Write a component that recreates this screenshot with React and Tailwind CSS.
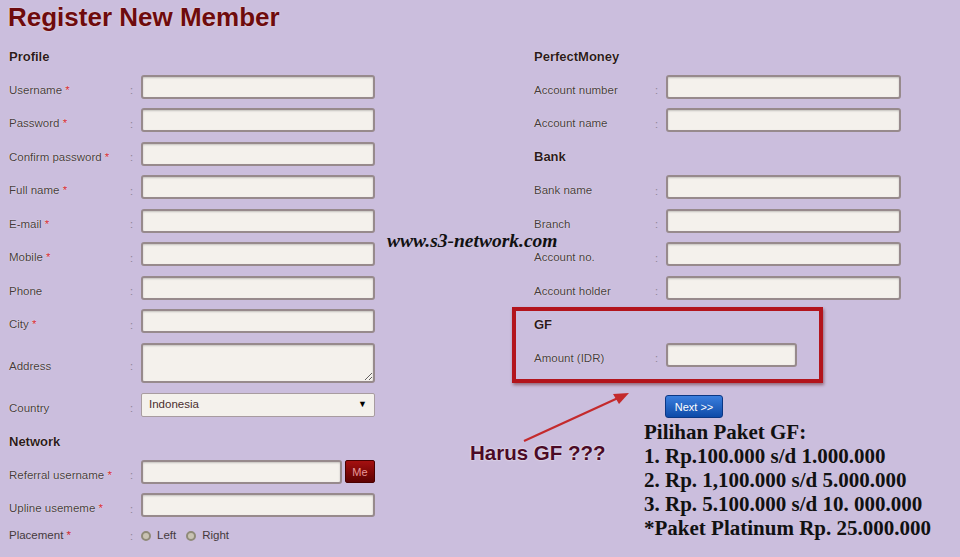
import React from "react";

const inputCls =
  "h-[24px] rounded-[3px] border-2 border-[#978a8c] bg-[#f4f1ec] shadow-[inset_0_1px_2px_rgba(0,0,0,0.2)] outline-none";

function Label({ text, req }) {
  return (
    <span className="mt-[7px] text-[11.5px] text-[#463a3c] [text-shadow:0_0_1px_#ffffff]">
      {text}
      {req && <span className="text-[#d3262e]"> *</span>}
    </span>
  );
}

function Colon() {
  return <span className="mt-[7px] text-[11px] text-[#8e8497]">:</span>;
}

function Heading({ children, className = "" }) {
  return (
    <div className={`flex h-[33.5px] items-center ${className}`}>
      <span className="mt-[6px] text-[13px] font-bold text-[#2d1a1c] [text-shadow:0_0_1px_#ffffff]">
        {children}
      </span>
    </div>
  );
}

function Row({ label, req, width = "w-[234px]", h = "h-[33.5px]", children }) {
  return (
    <div className={`grid grid-cols-[121px_11px_auto] items-center ${h}`}>
      <Label text={label} req={req} />
      <Colon />
      {children || <input className={`${inputCls} ${width}`} />}
    </div>
  );
}

export default function App() {
  return (
    <div className="relative h-[557px] w-[960px] overflow-hidden bg-[#cbbedd] font-['Liberation_Sans',Arial,sans-serif]">
      {/* title */}
      <div className="h-[36.5px] pl-[8px] pt-[1px]">
        <h1 className="text-[26px] font-bold leading-[32px] text-[#6e0b0d] [text-shadow:0_0_2px_#f3dede]">
          Register New Member
        </h1>
      </div>

      <div className="flex">
        {/* left column */}
        <div className="ml-[9px] w-[366px]">
          <Heading>Profile</Heading>
          <Row label="Username" req />
          <Row label="Password" req />
          <Row label="Confirm password" req />
          <Row label="Full name" req />
          <Row label="E-mail" req />
          <Row label="Mobile" req />
          <Row label="Phone" />
          <Row label="City" req />
          <Row label="Address" h="h-[50px]">
            <textarea className="h-[40px] w-[234px] rounded-[3px] border-2 border-[#978a8c] bg-[#f4f1ec] shadow-[inset_0_1px_2px_rgba(0,0,0,0.2)] outline-none" />
          </Row>
          <Row label="Country">
            <div className="flex h-[24px] w-[234px] items-center justify-between rounded-[2px] border border-[#a89ca0] bg-[#f4f1ec] px-[7px] text-[11.5px] text-[#4a2e2e]">
              <span>Indonesia</span>
              <span className="text-[9px] text-black">▼</span>
            </div>
          </Row>
          <Heading>Network</Heading>
          <Row label="Referral username" req>
            <div className="flex items-center gap-[3px]">
              <input className={`${inputCls} w-[201px]`} />
              <button className="h-[23px] w-[30px] rounded-[2px] border border-[#4a0000] bg-gradient-to-b from-[#a51010] to-[#5e0303] text-[11px] text-[#e79a9a]">
                Me
              </button>
            </div>
          </Row>
          <Row label="Upline usememe" req />
          <div className="grid h-[28px] grid-cols-[121px_11px_auto] items-center">
            <span className="text-[11.5px] text-[#463a3c]">
              Placement<span className="text-[#d3262e]"> *</span>
            </span>
            <span className="text-[11px] text-[#8e8497]">:</span>
            <div className="flex items-center text-[11.5px] text-[#463a3c]">
              <span className="h-[10px] w-[10px] rounded-full border-2 border-[#8f8a78] bg-[#c9c3b3]" />
              <span className="ml-[6px]">Left</span>
              <span className="ml-[10px] h-[10px] w-[10px] rounded-full border-2 border-[#8f8a78] bg-[#c9c3b3]" />
              <span className="ml-[6px]">Right</span>
            </div>
          </div>
        </div>

        {/* right column */}
        <div className="ml-[159px] w-[420px]">
          <Heading>PerfectMoney</Heading>
          <Row label="Account number" width="w-[235px]" />
          <Row label="Account name" width="w-[235px]" />
          <Heading>Bank</Heading>
          <Row label="Bank name" width="w-[235px]" />
          <Row label="Branch" width="w-[235px]" />
          <Row label="Account no." width="w-[235px]" />
          <Row label="Account holder" width="w-[235px]" />
          <div className="relative">
            <div className="absolute left-[-22px] top-[2.5px] h-[76px] w-[311px] border-[4px] border-[#b3141c] shadow-[1px_2px_3px_rgba(80,0,0,0.45)]" />
            <Heading>GF</Heading>
            <Row label="Amount (IDR)" width="w-[131px]" />
          </div>
          <div className="pl-[131px] pt-[22px]">
            <button className="h-[23px] w-[58px] rounded-[3px] border border-[#0b3784] bg-gradient-to-b from-[#3a7fde] to-[#0d4aa8] text-[11px] text-white">
              Next &gt;&gt;
            </button>
          </div>
          <div className="ml-[110px] mt-[2px] whitespace-nowrap font-['Liberation_Serif',serif] text-[21px] font-bold leading-[24px] text-[#111]">
            <div>Pilihan Paket GF:</div>
            <div>1. Rp.100.000 s/d 1.000.000</div>
            <div>2. Rp. 1,100.000 s/d 5.000.000</div>
            <div>3. Rp. 5.100.000 s/d 10. 000.000</div>
            <div>*Paket Platinum Rp. 25.000.000</div>
          </div>
        </div>
      </div>

      {/* watermark */}
      <div className="absolute left-[387px] top-[228px] font-['Liberation_Serif',serif] text-[19.5px] font-bold italic leading-[26px] text-[#111]">
        www.s3-network.com
      </div>

      {/* annotation */}
      <div className="absolute left-[470px] top-[439px] text-[20.5px] font-bold leading-[28px] text-[#4b0a26] [text-shadow:0_0_2px_#ffffff]">
        Harus GF ???
      </div>
      <svg className="absolute left-0 top-0" width="960" height="557">
        <line x1="524" y1="441" x2="618" y2="398" stroke="#c42a2c" strokeWidth="2.2" />
        <polygon points="629,393 613,394 619,404" fill="#c42a2c" />
      </svg>
    </div>
  );
}
